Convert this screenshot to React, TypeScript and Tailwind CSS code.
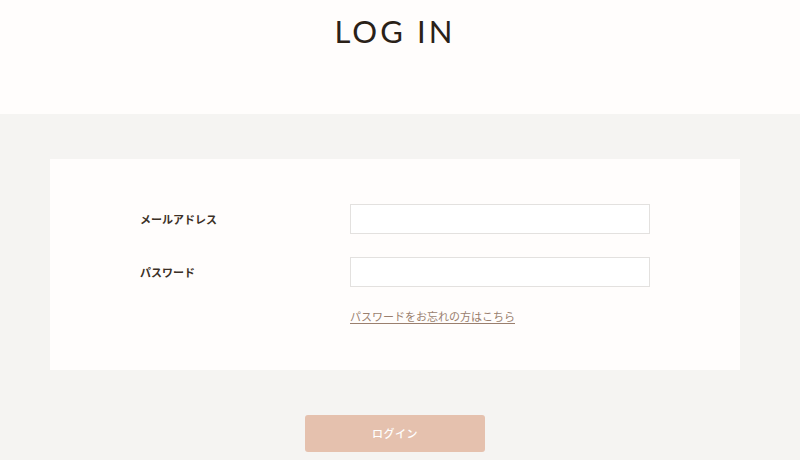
import React from 'react';

const jp = { fontFamily: '"Noto Sans CJK JP", "Noto Sans", sans-serif' };

export default function App() {
  return (
    <div className="w-[800px] h-[460px] overflow-hidden bg-[#f5f4f2]" style={jp}>
      <div className="w-[790px]">
        <header className="h-[114px] bg-[#fffdfc] w-[800px] flex">
          <div className="w-[790px] flex justify-center pt-[12px]">
            <h1
              className="text-[31px] leading-[38px] tracking-[0.1em] text-[#2a2118] font-normal"
              style={{ fontFamily: '"Lato", "Open Sans", sans-serif' }}
            >
              LOG IN
            </h1>
          </div>
        </header>

        <main className="pt-[45px] px-[50px]">
          <div className="bg-[#fffdfc] h-[211px] pt-[45px] pl-[90px]">
            <div className="flex items-center h-[30px]">
              <label className="w-[210px] text-[11px] font-semibold text-[#3b3026]">メールアドレス</label>
              <input className="w-[300px] h-[30px] border border-[#e3e1df] bg-white outline-none" />
            </div>
            <div className="flex items-center h-[30px] mt-[23px]">
              <label className="w-[210px] text-[11px] font-semibold text-[#3b3026]">パスワード</label>
              <input type="password" className="w-[300px] h-[30px] border border-[#e3e1df] bg-white outline-none" />
            </div>
            <div className="pl-[210px] mt-[19px] leading-[16px]">
              <a href="#" className="text-[11px] text-[#9a7f6e] underline underline-offset-2">
                パスワードをお忘れの方はこちら
              </a>
            </div>
          </div>

          <div className="flex justify-center mt-[45px]">
            <button className="w-[180px] h-[37px] rounded-[3px] bg-[#e5c1ae] text-white text-[11px] font-medium tracking-[0.05em]">
              ログイン
            </button>
          </div>
        </main>
      </div>
    </div>
  );
}
